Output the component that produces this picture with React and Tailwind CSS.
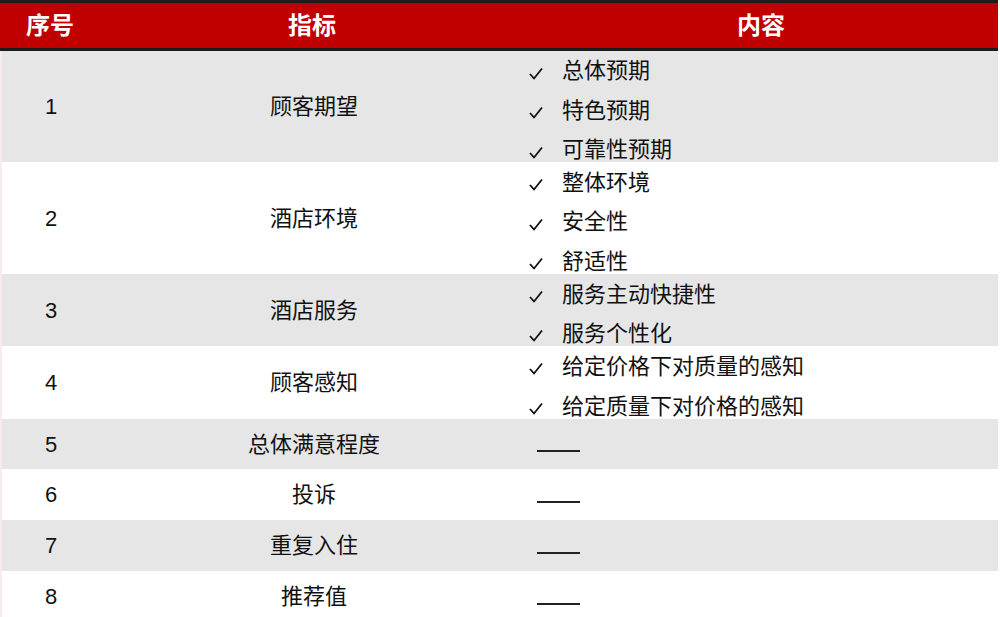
import React from 'react';

const rows = [
  { no: '1', name: '顾客期望', items: ['总体预期', '特色预期', '可靠性预期'], h: 'h-[111px]', gray: true },
  { no: '2', name: '酒店环境', items: ['整体环境', '安全性', '舒适性'], h: 'h-[112px]', gray: false },
  { no: '3', name: '酒店服务', items: ['服务主动快捷性', '服务个性化'], h: 'h-[72px]', gray: true },
  { no: '4', name: '顾客感知', items: ['给定价格下对质量的感知', '给定质量下对价格的感知'], h: 'h-[73px]', gray: false },
  { no: '5', name: '总体满意程度', items: null, h: 'h-[50px]', gray: true },
  { no: '6', name: '投诉', items: null, h: 'h-[51px]', gray: false },
  { no: '7', name: '重复入住', items: null, h: 'h-[51px]', gray: true },
  { no: '8', name: '推荐值', items: null, h: 'h-[51px]', gray: false },
];

const Check = () => (
  <svg width="14" height="13" viewBox="0 0 14 13" className="mt-[4px] shrink-0">
    <path d="M1 7 L5 11.5 L13 1.5" fill="none" stroke="#111" strokeWidth="1.8" strokeLinejoin="round" />
  </svg>
);

export default function App() {
  return (
    <div className="w-[1000px] bg-white text-[22px] text-[#111]" style={{ fontFamily: '"Liberation Sans", "Noto Sans CJK SC", sans-serif' }}>
      <div className="w-[998px] h-[51px] grid grid-cols-[100px_424px_474px] items-center bg-[#c00000] border-t-[3px] border-b-[3px] border-[#1c1c1c] text-white font-bold text-[24px]">
        <div className="text-center">序号</div>
        <div className="text-center">指标</div>
        <div className="text-center">内容</div>
      </div>
      {rows.map((r) => (
        <div
          key={r.no}
          className={`w-[998px] ${r.h} grid grid-cols-[100px_424px_474px] grid-rows-[minmax(0,1fr)] border-l-2 border-[#f7ecec] ${r.gray ? 'bg-[#e7e6e6]' : 'bg-white'}`}
        >
          <div className="flex items-center justify-center pr-[2px]">{r.no}</div>
          <div className="flex items-center justify-center">{r.name}</div>
          {r.items ? (
            <div className="flex flex-col justify-center pt-[8px] pl-[3px]">
              {r.items.map((it) => (
                <div key={it} className="flex items-start gap-[19px] leading-[39.5px] h-[39.5px] shrink-0">
                  <div className="h-[39.5px] flex items-center"><Check /></div>
                  <span>{it}</span>
                </div>
              ))}
            </div>
          ) : (
            <div className="flex items-center pl-[11px]">
              <div className="w-[43px] h-[2px] bg-[#222] mt-[14px]" />
            </div>
          )}
        </div>
      ))}
    </div>
  );
}
